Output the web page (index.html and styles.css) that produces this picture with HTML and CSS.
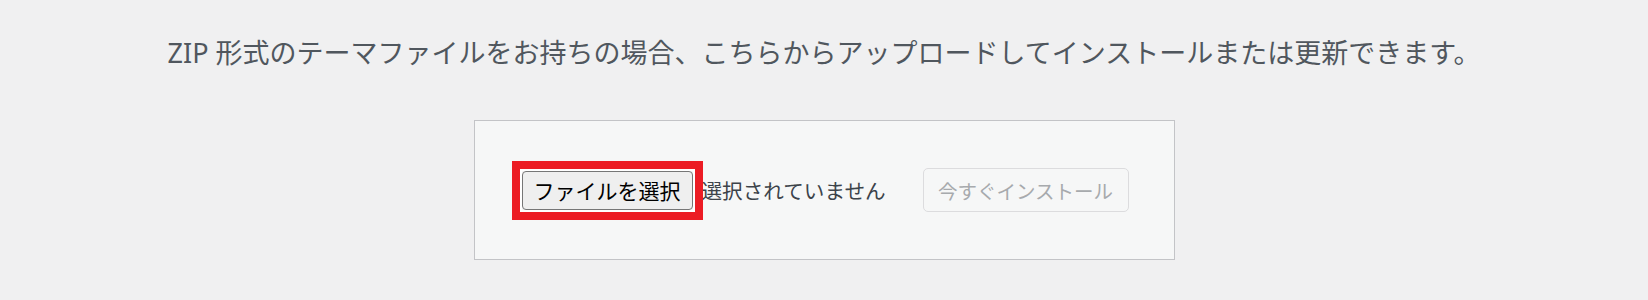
FILE: index.html
```html
<!DOCTYPE html>
<html lang="ja">
<head>
<meta charset="utf-8">
<title>テーマのアップロード</title>
<link rel="stylesheet" href="styles.css">
</head>
<body>
<div class="upload-theme">
  <p class="install-help">ZIP 形式のテーマファイルをお持ちの場合、こちらからアップロードしてインストールまたは更新できます。</p>
  <form class="upload-form">
    <span class="highlight"><button type="button" class="file-button">ファイルを選択</button></span>
    <span class="file-status">選択されていません</span>
    <button type="button" class="install-button" disabled>今すぐインストール</button>
  </form>
</div>
</body>
</html>
```
FILE: styles.css
```css
html, body {
  margin: 0;
  background: #f0f0f1;
}

body {
  font-family: "Noto Sans", "Noto Sans CJK JP", sans-serif;
}

.upload-theme {
  display: flex;
  flex-direction: column;
  align-items: center;
  padding-top: 33px;
}

.install-help {
  margin: 0;
  font-size: 27px;
  line-height: 40px;
  color: #50575e;
}

.upload-form {
  margin-top: 47px;
  box-sizing: border-box;
  height: 140px;
  width: 701px;
  display: flex;
  align-items: center;
  padding: 0 45px 0 47px;
  background: #f6f7f7;
  border: 1px solid #c3c4c7;
}

.highlight {
  position: relative;
  display: flex;
}

.highlight::after {
  content: "";
  position: absolute;
  top: -10px;
  left: -10px;
  right: -10px;
  bottom: -10px;
  border: 8px solid #ec1c24;
  box-shadow: inset 0 0 0 2px #ffffff;
  pointer-events: none;
}

.file-button {
  box-sizing: border-box;
  width: 171px;
  height: 39px;
  padding: 0;
  font-family: "Noto Sans CJK JP", sans-serif;
  font-size: 21px;
  color: #000;
  background: #efefef;
  border: 1px solid #767676;
  border-radius: 4px;
}

.file-status {
  margin-left: 9px;
  font-family: "Noto Sans CJK JP", sans-serif;
  font-size: 20.6px;
  color: #3c434a;
  white-space: nowrap;
}

.install-button {
  box-sizing: border-box;
  margin-left: auto;
  width: 206px;
  height: 44px;
  padding: 0;
  white-space: nowrap;
  font-family: "Noto Sans CJK JP", sans-serif;
  font-size: 19.5px;
  color: #a7aaad;
  background: #f6f7f7;
  border: 1px solid #dcdcde;
  border-radius: 5px;
}
```
